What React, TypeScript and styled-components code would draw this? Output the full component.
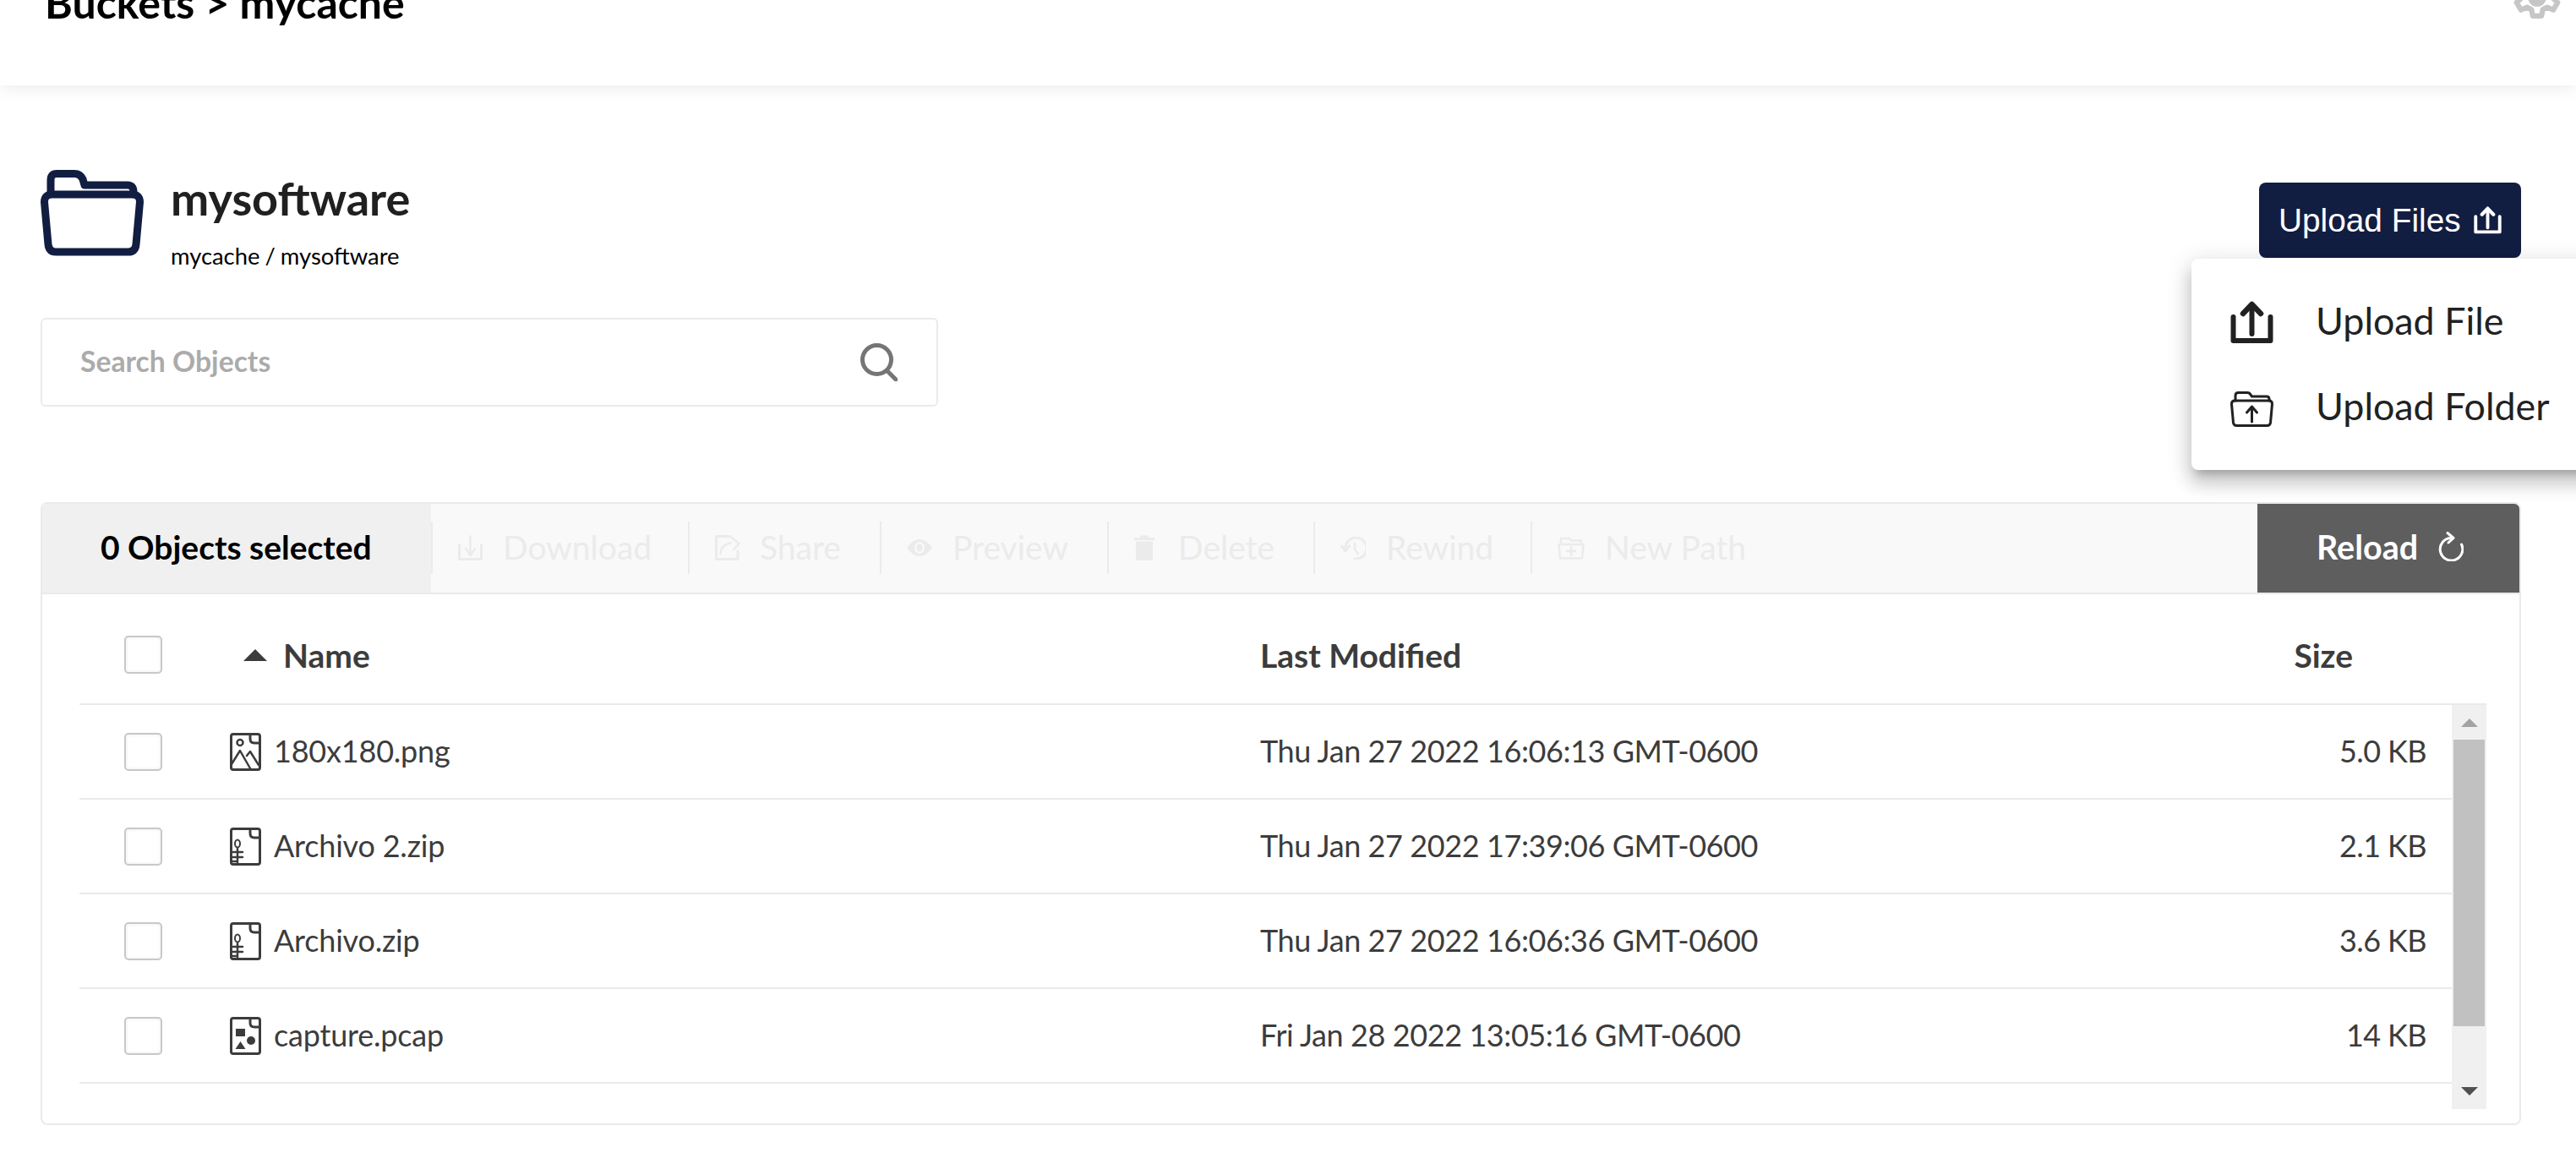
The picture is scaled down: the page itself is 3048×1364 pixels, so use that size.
import React from "react";
import styled, { createGlobalStyle } from "styled-components";

const Global = createGlobalStyle`
  html, body { margin: 0; padding: 0; width: 3048px; height: 1364px; overflow: hidden; background: #fff; }
  body { font-family: "Lato", "Liberation Sans", sans-serif; }
  * { box-sizing: border-box; }
`;

const Page = styled.div`
  width: 3048px;
  height: 1364px;
  overflow: hidden;
  background: #fff;
`;

const Header = styled.header`
  height: 101px;
  background: #fff;
  display: flex;
  align-items: flex-end;
  justify-content: space-between;
  padding: 0 15px 68px 53px;
  box-shadow: 0 3px 20px rgba(0, 0, 0, 0.08);
  position: relative;
`;

const PageTitle = styled.h1`
  margin: 0;
  font-size: 50px;
  line-height: 60px;
  font-weight: 700;
  color: #000;
  white-space: nowrap;
`;

const GearSvg = styled.svg`
  width: 62px;
  height: 62px;
  display: block;
  margin-bottom: 5px;
  color: #c6c6c6;
`;

const Content = styled.main`
  padding: 100px 65px 0 48px;
`;

const TitleRow = styled.section`
  display: flex;
  justify-content: space-between;
  align-items: flex-start;
  height: 102px;
`;

const TitleLeft = styled.div`
  display: flex;
  gap: 32px;
`;

const TitleText = styled.div`
  padding-top: 3px;
`;

const ObjectName = styled.div`
  font-size: 54px;
  line-height: 62px;
  font-weight: 700;
  color: #202020;
`;

const ObjectPath = styled.div`
  margin-top: 21px;
  font-size: 27.4px;
  line-height: 32px;
  color: #000;
  word-spacing: -1px;
`;

const UploadWrap = styled.div`
  position: relative;
  margin-top: 15px;
`;

const UploadButton = styled.button`
  width: 310px;
  height: 89px;
  border: 0;
  border-radius: 8px;
  background: #121d42;
  color: #fff;
  font-family: "Liberation Sans", Arial, sans-serif;
  font-size: 38.8px;
  display: flex;
  align-items: center;
  padding: 0 0 0 23px;
  gap: 15px;
`;

const Menu = styled.div`
  position: absolute;
  top: 90px;
  left: -80px;
  width: 540px;
  height: 250px;
  background: #fff;
  border-radius: 8px;
  padding: 50px 0 0 46px;
  box-shadow: 0 10px 10px -6px rgba(0, 0, 0, 0.2), 0 16px 20px 2px rgba(0, 0, 0, 0.14),
    0 6px 28px 4px rgba(0, 0, 0, 0.12);
  z-index: 5;
`;

const MenuItem = styled.div`
  height: 101px;
  display: flex;
  align-items: flex-start;
  gap: 50px;
  font-size: 44.8px;
  line-height: 46px;
  color: #212121;
  white-space: nowrap;
`;

const MenuIconBox = styled.span<{ $top?: number }>`
  width: 51px;
  height: 50px;
  display: flex;
  flex: none;
  align-items: flex-start;
  padding-top: ${(p) => p.$top ?? 0}px;
`;

const SearchBox = styled.div`
  margin-top: 73px;
  width: 1062px;
  height: 105px;
  border: 2px solid #eaeaea;
  border-radius: 6px;
  display: flex;
  align-items: center;
  justify-content: space-between;
  padding: 0 46px 0 45px;
`;

const SearchPlaceholder = styled.span`
  font-size: 33.7px;
  font-weight: 700;
  color: #ababab;
  margin-bottom: 4px;
`;

const Panel = styled.section`
  margin-top: 113px;
  width: 2935px;
  height: 737px;
  border: 2px solid #eaeaea;
  border-radius: 8px;
  position: relative;
`;

const Toolbar = styled.div`
  height: 107px;
  display: flex;
  align-items: stretch;
  background: #f9f9f9;
  border-bottom: 2px solid #eaeaea;
`;

const Selected = styled.div`
  width: 460px;
  height: 105px;
  background: #f0f0f0;
  display: flex;
  align-items: center;
  padding: 0 0 4px 69px;
  font-size: 39px;
  font-weight: 700;
  color: #000;
  white-space: nowrap;
`;

const ActionGroup = styled.div`
  display: flex;
  align-items: flex-start;
  padding-top: 21px;
  flex: 1;
`;

const Action = styled.div<{ $w: number; $gap: number }>`
  width: ${(p) => p.$w}px;
  height: 62px;
  border-left: 2px solid #ebebeb;
  display: flex;
  align-items: center;
  padding-left: 30px;
  gap: ${(p) => p.$gap}px;
  font-size: 39px;
  color: #ebebeb;
  white-space: nowrap;
`;

const ActionLabel = styled.span`
  margin-bottom: 3px;
`;

const ReloadButton = styled.div`
  width: 310px;
  height: 105px;
  background: #5e5e5e;
  border-top-right-radius: 6px;
  display: flex;
  align-items: center;
  padding: 0 0 4px 70px;
  gap: 24px;
  font-size: 39.5px;
  font-weight: 700;
  color: #fff;
`;

const RowsArea = styled.div`
  margin: 0 39px 0 44px;
  position: relative;
`;

const Row = styled.div<{ $head?: boolean }>`
  height: ${(p) => (p.$head ? 131 : 112)}px;
  border-bottom: 2px solid #eaeaea;
  display: grid;
  grid-template-columns: 178px 1219px 1fr 400px;
  align-items: center;
  color: #3c3c3c;
  font-size: ${(p) => (p.$head ? 39 : 36)}px;
  font-weight: ${(p) => (p.$head ? 700 : 400)};
  padding-top: ${(p) => (p.$head ? 14 : 0)}px;
`;

const Check = styled.span`
  margin-left: 53px;
  width: 45px;
  height: 45px;
  display: block;
  border: 2px solid #c8c8c8;
  border-radius: 5px;
  background: #fff;
  box-shadow: inset 0 0 4px rgba(0, 0, 0, 0.08);
`;

const NameCell = styled.div<{ $head?: boolean }>`
  display: flex;
  align-items: center;
  gap: ${(p) => (p.$head ? 19 : 15)}px;
  padding-left: ${(p) => (p.$head ? 16 : 0)}px;
  white-space: nowrap;
`;

const FileName = styled.span`
  letter-spacing: -0.2px;
  margin-bottom: 2px;
`;

const SortUp = styled.span`
  width: 0;
  height: 0;
  border-left: 14px solid transparent;
  border-right: 14px solid transparent;
  border-bottom: 14px solid #3c3c3c;
`;

const DateCell = styled.div<{ $head?: boolean }>`
  white-space: nowrap;
  letter-spacing: ${(p) => (p.$head ? 0 : -0.42)}px;
  margin-bottom: ${(p) => (p.$head ? 0 : 2)}px;
`;

const SizeCell = styled.div<{ $head?: boolean }>`
  text-align: right;
  padding-right: ${(p) => (p.$head ? 158 : 71)}px;
  letter-spacing: ${(p) => (p.$head ? 0 : -0.6)}px;
  margin-bottom: ${(p) => (p.$head ? 0 : 2)}px;
`;

const ScrollTrack = styled.div`
  position: absolute;
  top: 131px;
  right: 0;
  width: 41px;
  height: 478px;
  background: #f0f0f0;
  display: flex;
  flex-direction: column;
  align-items: center;
  justify-content: space-between;
  padding: 16px 0;
`;

const ScrollThumb = styled.div`
  position: absolute;
  top: 41px;
  left: 2px;
  width: 37px;
  height: 339px;
  background: #c1c1c1;
`;

const ArrowUp = styled.span`
  width: 0;
  height: 0;
  border-left: 10px solid transparent;
  border-right: 10px solid transparent;
  border-bottom: 10px solid #a3a3a3;
`;

const ArrowDown = styled.span`
  width: 0;
  height: 0;
  border-left: 10px solid transparent;
  border-right: 10px solid transparent;
  border-top: 10px solid #505050;
`;

const Gear = () => (
  <GearSvg viewBox="0 0 24 24" fill="none" stroke="currentColor" strokeWidth="2.4" strokeLinejoin="round">
    <path d="M10 2.5 h4 l.6 3 2 1 2.8-1.2 2 3.4-2.2 2v1.6l2.2 2-2 3.4-2.8-1.2-2 1-.6 3h-4l-.6-3-2-1-2.8 1.2-2-3.4 2.2-2v-1.6l-2.2-2 2-3.4 2.8 1.2 2-1z" />
    <circle cx="12" cy="12" r="3" fill="currentColor" />
  </GearSvg>
);

const BigFolder = () => (
  <svg width="122" height="102" viewBox="0 0 122 102" fill="none" stroke="#121d42" strokeWidth="9" strokeLinejoin="round">
    <path d="M4.5 38 Q4.5 29 14 29 H108 Q117.5 29 117.5 38 L113 88 Q112 97 104 97 H18 Q10 97 9 88 Z" />
    <path d="M12 29 V12 Q12 4.5 19 4.5 H40 Q47 4.5 50 11 L52 18 H103 Q110 18 110 26 V29" />
  </svg>
);

const UploadGlyph = ({ size, color }: { size: number; color: string }) => (
  <svg width={size} height={size * 0.98} viewBox="0 0 51 50" fill="none" stroke={color} strokeWidth="6" strokeLinecap="round">
    <path d="M3.5 19 V47 H47.5 V19" strokeLinejoin="round" />
    <path d="M25.5 6 V39" />
    <path d="M15 15 L25.5 4 L36 15" strokeLinejoin="round" strokeWidth="6.5" />
  </svg>
);

const FolderUpload = () => (
  <svg width="51" height="42" viewBox="0 0 51 42" fill="none" stroke="#212121" strokeWidth="3" strokeLinecap="round" strokeLinejoin="round">
    <path d="M1.5 15 Q1.5 11 5 11 H46 Q49.5 11 49.5 15 L47.5 37 Q47 40.5 43.5 40.5 H7.5 Q4 40.5 3.5 37 Z" />
    <path d="M6 11 V5 Q6 1.5 9.5 1.5 H20 Q23 1.5 24 4 L25.5 6 H43 Q46 6 46 9 V11" />
    <path d="M25.5 36 V19 M19.5 25 L25.5 18 L31.5 25" />
  </svg>
);

const SearchIcon = () => (
  <svg width="44" height="45" viewBox="0 0 44 45" fill="none" stroke="#757575" strokeWidth="5" strokeLinecap="round">
    <circle cx="19.5" cy="19.5" r="17" />
    <path d="M32 33 L42 43" />
  </svg>
);

const ReloadIcon = () => (
  <svg width="30" height="35" viewBox="0 0 30 35" fill="none" stroke="#fff" strokeWidth="3" strokeLinecap="round" strokeLinejoin="round">
    <path d="M27.5 15 A13.3 13.3 0 1 1 14.5 7.5" />
    <path d="M11 1.5 L18 7.5 L12 13" />
  </svg>
);

const tool = { fill: "none", stroke: "#ebebeb", strokeWidth: 2.5, strokeLinecap: "round" as const, strokeLinejoin: "round" as const };

const DownloadIcon = () => (
  <svg width="29" height="30" viewBox="0 0 29 30" {...tool}>
    <path d="M1.5 12 V28.5 H27.5 V12" strokeWidth="3" />
    <path d="M14.5 1.5 V23 M9 16 L14.5 24 L20 16" />
  </svg>
);
const ShareIcon = () => (
  <svg width="30" height="30" viewBox="0 0 30 30" {...tool}>
    <path d="M18 1.5 H1.5 V28.5 H27 V19" strokeWidth="3" />
    <path d="M6.5 22 Q7.5 11 19 9.5 M20 3 L28.5 10 L22 17" />
  </svg>
);
const EyeIcon = () => (
  <svg width="30" height="20" viewBox="0 0 30 20">
    <path d="M0 10 Q7 0 15 0 Q23 0 30 10 Q23 20 15 20 Q7 20 0 10 Z" fill="#ebebeb" />
    <ellipse cx="15" cy="10" rx="6" ry="7" fill="#f9f9f9" />
    <ellipse cx="15" cy="10" rx="3.5" ry="4.5" fill="#ebebeb" />
  </svg>
);
const TrashIcon = () => (
  <svg width="24" height="30" viewBox="0 0 24 30" fill="#ebebeb">
    <path d="M0 3 H7 V0.5 H17 V3 H24 V6 H0 Z" />
    <path d="M2 7.5 H22 V27 Q22 30 19 30 H5 Q2 30 2 27 Z" />
  </svg>
);
const RewindIcon = () => (
  <svg width="30" height="27" viewBox="0 0 30 27" {...tool}>
    <path d="M6 14 A12.5 12.5 0 1 1 17 26" strokeWidth="3" />
    <path d="M1.5 11 L6 17 L10.5 11" strokeWidth="3" />
    <path d="M17 8 V15 L21 20" />
  </svg>
);
const NewPathIcon = () => (
  <svg width="32" height="27" viewBox="0 0 32 27" {...tool}>
    <path d="M1.5 9 H30.5 L29 25.5 H3 Z" />
    <path d="M4 9 V2 H14 L16 4.5 H28 V9" />
    <path d="M16 12.5 V22 M11 17 H21" />
  </svg>
);

const FileSvg = styled.svg`
  flex: none;
`;

const FileFrame = ({ children }: { children?: React.ReactNode }) => (
  <FileSvg width="37" height="45" viewBox="0 0 37 45" fill="none" stroke="#3c3c3c" strokeWidth="3" strokeLinejoin="round" strokeLinecap="round">
    <rect x="1.5" y="1.5" width="34" height="42" rx="2.5" />
    <path d="M24 2 V7 Q24 12 29 12 H35" />
    {children}
  </FileSvg>
);

const ImageFile = () => (
  <FileFrame>
    <circle cx="12" cy="11.5" r="3.5" strokeWidth="2.5" />
    <path d="M2 37 L12 21 L24 42 M20 27 L24 22 L34 38" strokeWidth="2.5" />
  </FileFrame>
);
const ZipFile = () => (
  <FileFrame>
    <ellipse cx="9" cy="19" rx="3" ry="4.5" strokeWidth="2" />
    <path d="M9 25 V43 M4 29 H15 M4 35 H15 M4 40 H9" strokeWidth="2.5" />
  </FileFrame>
);
const DataFile = () => (
  <FileFrame>
    <rect x="7" y="14" width="11" height="9" fill="#3c3c3c" stroke="none" />
    <circle cx="25" cy="28" r="5" fill="#3c3c3c" stroke="none" />
    <path d="M6.5 38 L12.5 29 L18.5 38 Z" fill="#3c3c3c" stroke="none" />
  </FileFrame>
);

const files = [
  { icon: <ImageFile />, name: "180x180.png", date: "Thu Jan 27 2022 16:06:13 GMT-0600", size: "5.0 KB" },
  { icon: <ZipFile />, name: "Archivo 2.zip", date: "Thu Jan 27 2022 17:39:06 GMT-0600", size: "2.1 KB" },
  { icon: <ZipFile />, name: "Archivo.zip", date: "Thu Jan 27 2022 16:06:36 GMT-0600", size: "3.6 KB" },
  { icon: <DataFile />, name: "capture.pcap", date: "Fri Jan 28 2022 13:05:16 GMT-0600", size: "14 KB" },
];

const actions = [
  { w: 304, gap: 24, icon: <DownloadIcon />, label: "Download" },
  { w: 227, gap: 23, icon: <ShareIcon />, label: "Share" },
  { w: 269, gap: 24, icon: <EyeIcon />, label: "Preview" },
  { w: 244, gap: 28, icon: <TrashIcon />, label: "Delete" },
  { w: 257, gap: 24, icon: <RewindIcon />, label: "Rewind" },
  { w: 297, gap: 24, icon: <NewPathIcon />, label: "New Path" },
];

export default function App() {
  return (
    <Page>
      <Global />
      <Header>
        <PageTitle>Buckets &gt; mycache</PageTitle>
        <Gear />
      </Header>
      <Content>
        <TitleRow>
          <TitleLeft>
            <BigFolder />
            <TitleText>
              <ObjectName>mysoftware</ObjectName>
              <ObjectPath>mycache / mysoftware</ObjectPath>
            </TitleText>
          </TitleLeft>
          <UploadWrap>
            <UploadButton>
              Upload Files
              <UploadGlyph size={33} color="#fff" />
            </UploadButton>
            <Menu>
              <MenuItem>
                <MenuIconBox>
                  <UploadGlyph size={51} color="#212121" />
                </MenuIconBox>
                Upload File
              </MenuItem>
              <MenuItem>
                <MenuIconBox $top={6}>
                  <FolderUpload />
                </MenuIconBox>
                Upload Folder
              </MenuItem>
            </Menu>
          </UploadWrap>
        </TitleRow>
        <SearchBox>
          <SearchPlaceholder>Search Objects</SearchPlaceholder>
          <SearchIcon />
        </SearchBox>
        <Panel>
          <Toolbar>
            <Selected>0 Objects selected</Selected>
            <ActionGroup>
              {actions.map((a) => (
                <Action key={a.label} $w={a.w} $gap={a.gap}>
                  {a.icon}
                  <ActionLabel>{a.label}</ActionLabel>
                </Action>
              ))}
            </ActionGroup>
            <ReloadButton>
              Reload
              <ReloadIcon />
            </ReloadButton>
          </Toolbar>
          <RowsArea>
            <Row $head>
              <Check />
              <NameCell $head>
                <SortUp />
                Name
              </NameCell>
              <DateCell $head>Last Modified</DateCell>
              <SizeCell $head>Size</SizeCell>
            </Row>
            {files.map((f) => (
              <Row key={f.name}>
                <Check />
                <NameCell>
                  {f.icon}
                  <FileName>{f.name}</FileName>
                </NameCell>
                <DateCell>{f.date}</DateCell>
                <SizeCell>{f.size}</SizeCell>
              </Row>
            ))}
            <ScrollTrack>
              <ScrollThumb />
              <ArrowUp />
              <ArrowDown />
            </ScrollTrack>
          </RowsArea>
        </Panel>
      </Content>
    </Page>
  );
}
